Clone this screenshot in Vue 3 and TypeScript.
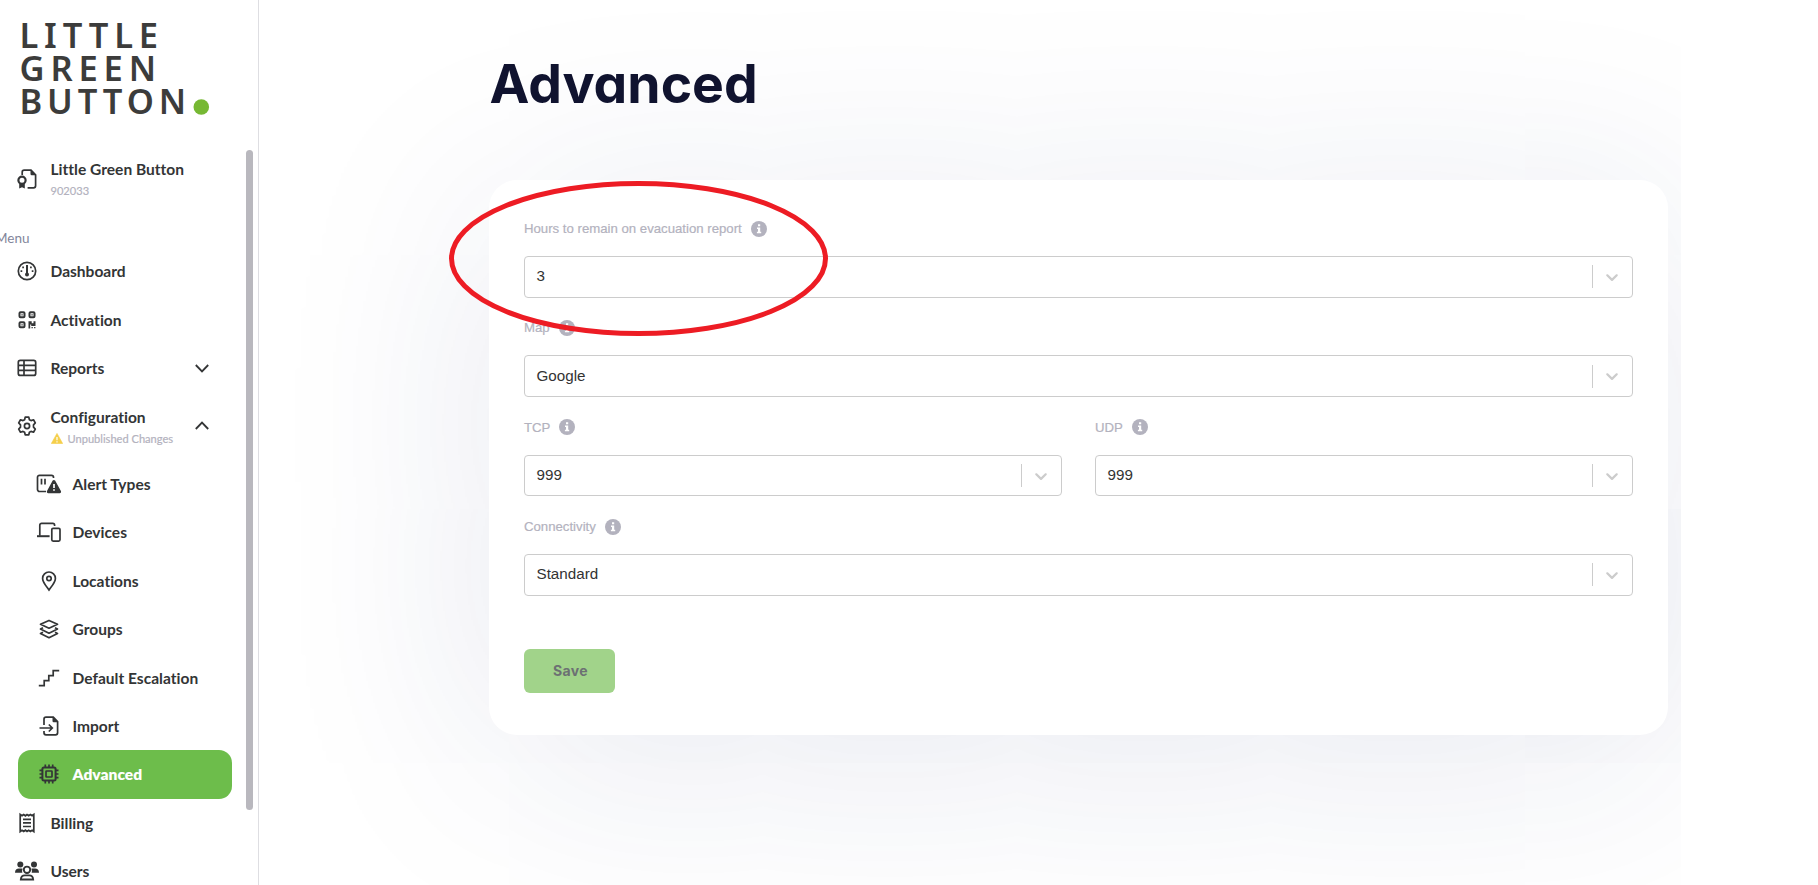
<template>
  <div class="layout">
    <aside class="sidebar">
      <svg class="logo" width="258" height="130" viewBox="0 0 258 130">
        <text x="19.500" y="48" textLength="138.500">LITTLE</text>
        <text x="19.500" y="81" textLength="136.500">GREEN</text>
        <text x="19.500" y="114" textLength="166.500">BUTTON</text>
        <circle cx="201.300" cy="107" r="7.800" />
      </svg>

      <div class="scroll-area">
        <div class="org">
          <svg class="icon" viewBox="0 0 24 24" v-html="icons.license"></svg>
          <div class="texts">
            <span class="name">Little Green Button</span>
            <span class="note">902033</span>
          </div>
        </div>
        <div class="menu-title">Menu</div>
        <nav>
          <a
            v-for="item in menu"
            :key="item.label"
            class="item"
            :class="{ sub: item.sub, active: item.active, tall: item.note }"
          >
            <svg class="icon" viewBox="0 0 24 24" v-html="icons[item.icon]"></svg>
            <div class="texts">
              <span class="name">{{ item.label }}</span>
              <span v-if="item.note" class="note">
                <svg class="warn" width="12" height="11" viewBox="0 0 12 11">
                  <path d="M6 .4 11.7 10.5H.3z" fill="#f5cf4a" stroke="#f5cf4a" stroke-width=".6" stroke-linejoin="round" />
                  <path d="M6 4v3.2M6 8.2v1.2" stroke="#fff" stroke-width="1.2" />
                </svg>
                {{ item.note }}
              </span>
            </div>
            <svg v-if="item.toggle" class="toggle" width="16" height="16" viewBox="0 0 16 16">
              <path :d="item.toggle === 'open' ? 'M1.8 11 8 4.6l6.2 6.4' : 'M1.8 5 8 11.4 14.2 5'" />
            </svg>
          </a>
        </nav>
        <div class="scrollbar"></div>
      </div>
    </aside>

    <main class="content">
      <h1>Advanced</h1>
      <section class="card">
        <div class="fields">
          <div v-for="f in fields" :key="f.label" class="field" :class="{ half: f.half }">
            <label>
              {{ f.label }}
              <svg width="16" height="16" viewBox="0 0 16 16">
                <circle cx="8" cy="8" r="8" fill="#b3b2be" />
                <path d="M7 3.3h2.2v2H7zM6 6.5h3.2v4.2h1v1.6H5.9v-1.6H7V8H6z" fill="#fff" />
              </svg>
            </label>
            <div class="select">
              <span class="value">{{ f.value }}</span>
              <span class="separator"></span>
              <svg class="arrow" width="20" height="20" viewBox="0 0 20 20">
                <path d="M4.5 7.5c.45-.45 1.05-.5 1.6 0L10 11.3l3.9-3.8c.55-.5 1.15-.45 1.6 0 .43.45.4 1.2 0 1.6l-4.7 4.55a1.15 1.15 0 0 1-1.6 0L4.5 9.1c-.4-.4-.43-1.15 0-1.6z" />
              </svg>
            </div>
          </div>
        </div>
        <button type="button" class="save" disabled>Save</button>
      </section>
    </main>

    <svg class="highlight" width="380" height="156" viewBox="0 0 380 156">
      <ellipse cx="189.5" cy="77.5" rx="187" ry="75" />
    </svg>
  </div>
</template>

<script setup lang="ts">
import { ref } from 'vue';

interface MenuItem {
  label: string;
  icon: string;
  note?: string;
  sub?: boolean;
  active?: boolean;
  toggle?: 'open' | 'closed';
}

interface Field {
  label: string;
  value: string;
  half?: boolean;
}

const menu = ref<MenuItem[]>([
  { label: 'Dashboard', icon: 'gauge' },
  { label: 'Activation', icon: 'qr' },
  { label: 'Reports', icon: 'table', toggle: 'closed' },
  { label: 'Configuration', icon: 'gear', note: 'Unpublished Changes', toggle: 'open' },
  { label: 'Alert Types', icon: 'alert', sub: true },
  { label: 'Devices', icon: 'devices', sub: true },
  { label: 'Locations', icon: 'pin', sub: true },
  { label: 'Groups', icon: 'layers', sub: true },
  { label: 'Default Escalation', icon: 'stairs', sub: true },
  { label: 'Import', icon: 'import', sub: true },
  { label: 'Advanced', icon: 'chip', sub: true, active: true },
  { label: 'Billing', icon: 'receipt' },
  { label: 'Users', icon: 'users' },
]);

const fields = ref<Field[]>([
  { label: 'Hours to remain on evacuation report', value: '3' },
  { label: 'Map', value: 'Google' },
  { label: 'TCP', value: '999', half: true },
  { label: 'UDP', value: '999', half: true },
  { label: 'Connectivity', value: 'Standard' },
]);

// fill-only shapes carry class "f"
const icons: Record<string, string> = {
  license:
    '<path d="M7.2 8V5.2a2 2 0 0 1 2-2H16l4.6 4.6v11a2 2 0 0 1-2 2h-6"/><path class="f" d="M15.5 2.8 21 8.3h-4.3a1.2 1.2 0 0 1-1.2-1.2z"/><circle cx="7" cy="13.2" r="3.6" stroke-width="2.2"/><path class="f" d="M4.2 16h5.6v5.6L7 20.2l-2.8 1.4z"/>',
  gauge:
    '<circle cx="12" cy="12" r="8.7"/><path d="M12 6v9" stroke-width="2"/><circle class="f" cx="12" cy="15.6" r="2"/><path d="M8.1 7.6v1.7M15.9 7.6v1.7M6.4 11.3v1.6M17.6 11.3v1.6" stroke-width="1.7"/>',
  qr:
    '<rect x="4.5" y="4.3" width="5" height="5" rx="1" stroke-width="2"/><rect x="14.5" y="4.3" width="5" height="5" rx="1" stroke-width="2"/><rect x="4.5" y="14.3" width="5" height="5" rx="1" stroke-width="2"/><path class="f" d="M6.4 6.2h1.3v1.3H6.4zM16.4 6.2h1.3v1.3h-1.3zM6.4 16.2h1.3v1.3H6.4zM13.5 13.3h3.2v2h1.8v-2h2v4.6h-4.3v-1.3h-1v3.9h-1.7zM16.5 19h1.3v1.3h-1.3zM19.1 19h1.3v1.3h-1.3z"/>',
  table:
    '<rect x="3.3" y="4.4" width="17.4" height="15" rx="2"/><path d="M3.3 9.3h17.4M3.3 14.4h17.4M9 4.4v15"/>',
  gear:
    '<path d="M10.2 3.2h3.6l.6 2.5 1.6.9 2.5-.8 1.8 3.1-1.8 1.9v2.4l1.8 1.9-1.8 3.1-2.5-.8-1.6.9-.6 2.5h-3.6l-.6-2.5-1.6-.9-2.5.8-1.8-3.1 1.8-1.9v-2.4L3.7 8.900l1.8-3.1 2.5.8 1.6-.9z" stroke-linejoin="round"/><circle cx="12" cy="12" r="2.6"/>',
  alert:
    '<path d="M9 19.5H2.5a2 2 0 0 1-2-2V5.3a2 2 0 0 1 2-2h12a2 2 0 0 1 2 2V6"/><path d="M4.5 6.8v5.7M8 6.8v5.7"/><path class="f" d="M15.7 8.6a1.4 1.4 0 0 1 2.4 0l5.8 10.5a1.4 1.4 0 0 1-1.2 2.1H11.2a1.4 1.4 0 0 1-1.2-2.1z"/><path d="M17 12v4M17 17.2v1.5" stroke="#fff"/>',
  devices:
    '<path d="M2.8 15.7V5.2a1.8 1.8 0 0 1 1.8-1.8h11.2a1.8 1.8 0 0 1 1.8 1.8v.8"/><path d="M0 16.2h12.6" stroke-width="2"/><rect x="14.8" y="8.3" width="8.2" height="12.8" rx="1.3"/>',
  pin:
    '<path d="M12 21c-1.5-2.3-6.4-7.6-6.4-11.6a6.4 6.4 0 0 1 12.8 0C18.4 13.4 13.5 18.7 12 21z"/><circle cx="12" cy="9.5" r="2.2"/>',
  layers:
    '<path d="M12 3.4 20.5 7.3 12 11.2 3.5 7.3zM6 10.7 3.5 12 12 16.2 20.5 12 18 10.7M6 15.2l-2.5 1.3 8.5 4.2 8.5-4.2-2.5-1.3" stroke-linejoin="round"/>',
  stairs:
    '<path d="M1.8 19.7h5.4v-5h4.6v-5h4.4v-5h6"/>',
  import:
    '<path d="M7 11V5.2a2 2 0 0 1 2-2h7.3l4.3 4.3v11.3a2 2 0 0 1-2 2H9a2 2 0 0 1-2-2V17M2.5 14h12.3M11.8 10.5l3.5 3.5-3.5 3.5"/><path class="f" d="M15.5 2.8 21 8.3h-4.3a1.2 1.2 0 0 1-1.2-1.2z"/>',
  chip:
    '<rect x="5.4" y="5.4" width="13.2" height="13.2" rx="1.5" stroke-width="2"/><rect x="9" y="9" width="6" height="6" rx=".5"/><path d="M8.3 2.5v3M12 2.5v3M15.7 2.5v3M8.3 18.5v3M12 18.5v3M15.7 18.5v3M2.5 8.3h3M2.5 12h3M2.5 15.7h3M18.5 8.3h3M18.5 12h3M18.5 15.7h3"/>',
  receipt:
    '<path d="M5.2 3.5 7 4.8l1.7-1.3 1.7 1.3L12 3.5l1.7 1.3 1.7-1.3 1.7 1.3 1.7-1.3v17l-1.7-1.3-1.7 1.3-1.7-1.3L12 20.5l-1.6-1.3-1.7 1.3L7 19.2l-1.8 1.3z"/><path d="M8 8.3h8M8 11.9h8M8 15.5h8"/>',
  users:
    '<circle class="f" cx="5.3" cy="5.5" r="3"/><circle class="f" cx="19" cy="5.5" r="3"/><path class="f" d="M0 13.7c0-3 1.6-4.2 4-4.2h3c.6 0 .6.4.4 1-.5 1.3-.3 2.2 0 3.2zM24 13.7c0-3-1.6-4.2-4-4.2h-3c-.6 0-.6.4-.4 1 .5 1.3.3 2.2 0 3.2z"/><circle cx="12" cy="10.8" r="3.2" stroke-width="1.9"/><path d="M5.8 20.5c.2-3 1.7-4.2 4-4.2h4.4c2.3 0 3.8 1.2 4 4.2z" stroke-width="1.8"/>',
};
</script>

<style>
body {
  margin: 0;
  background: #fff;
}
</style>

<style scoped>
.layout {
  position: relative;
  display: flex;
  height: 885px;
  overflow: hidden;
  background: #fff;
}
.sidebar {
  box-sizing: border-box;
  width: 259px;
  flex-shrink: 0;
  border-right: 1px solid #dedee2;
  font-family: Lato, 'Liberation Sans', sans-serif;
  font-variant-ligatures: none;
  color: #333536;
}
.logo {
  display: block;
}
.logo text {
  font-family: 'Noto Sans', sans-serif;
  font-size: 34.5px;
  font-weight: 650;
  fill: #3c3c3b;
}
.logo circle {
  fill: #76b833;
}
.scroll-area {
  position: relative;
  padding-top: 24px;
}
.scrollbar {
  position: absolute;
  top: 20px;
  right: 5px;
  width: 7px;
  height: 660px;
  border-radius: 4px;
  background: #b9b8be;
}
.org,
.item {
  display: flex;
  align-items: center;
  box-sizing: border-box;
}
.org {
  height: 49px;
  padding-left: 14.5px;
}
.item {
  height: 48.4px;
  width: 214px;
  margin-left: 18px;
  border-radius: 13px;
}
.item:not(.sub) .icon {
  margin-left: -3.5px;
}
.item.sub {
  padding-left: 18.5px;
}
.item.tall {
  height: 67.3px;
}
.org .texts,
.item.tall .texts {
  padding-top: 2px;
}
.item.active {
  background: #6dbd4b;
}
.item.active .name {
  color: #fff;
  font-weight: 800;
}
.icon {
  width: 24px;
  height: 24px;
  flex-shrink: 0;
  overflow: visible;
  fill: none;
  stroke: #333536;
  stroke-width: 1.7;
}
.icon :deep(.f) {
  fill: #333536;
  stroke: none;
}
.texts {
  display: flex;
  flex-direction: column;
  margin-left: 12px;
}
.name {
  font-size: 15.55px;
  line-height: 22px;
  font-weight: 700;
  white-space: nowrap;
}
.note {
  display: flex;
  align-items: center;
  gap: 5px;
  font-size: 11.1px;
  line-height: 21px;
  color: #b3b2be;
  white-space: nowrap;
  -webkit-text-stroke: 0.2px #b3b2be;
}
.toggle {
  margin-left: auto;
  margin-right: 22px;
  fill: none;
  stroke: #333536;
  stroke-width: 1.8;
}
.menu-title {
  height: 44.3px;
  margin-left: -5px;
  font-size: 13.5px;
  line-height: 71px;
  color: #83869b;
}
.content {
  box-sizing: border-box;
  width: 1422px;
  padding: 46px 13px 0 230px;
  overflow: hidden;
}
h1 {
  margin: 0;
  height: 134px;
  font-family: Inter, 'Liberation Sans', sans-serif;
  font-feature-settings: 'cv11';
  font-size: 53.5px;
  line-height: 76px;
  font-weight: 650;
  letter-spacing: 0;
  text-indent: 0.5px;
  color: #10132f;
}
.card {
  box-sizing: border-box;
  height: 555px;
  padding: 36px 35px 0;
  border-radius: 28px;
  background: #fff;
  box-shadow: 0 24px 220px -6px rgba(30, 45, 110, 0.135);
  font-family: 'Liberation Sans', Arial, sans-serif;
}
.fields {
  display: grid;
  grid-template-columns: 1fr 1fr;
  column-gap: 33px;
}
.field {
  grid-column: span 2;
  height: 99.4px;
}
.field.half {
  grid-column: span 1;
}
.field label {
  display: flex;
  align-items: center;
  gap: 9px;
  height: 25px;
  margin-bottom: 15px;
  font-size: 13.2px;
  color: #b3b2be;
  -webkit-text-stroke: 0.2px #b3b2be;
}
.select {
  display: flex;
  align-items: center;
  box-sizing: border-box;
  height: 41.6px;
  padding-left: 11.5px;
  border: 1px solid #ccc;
  border-radius: 4px;
}
.value {
  flex: 1;
  padding-bottom: 1px;
  font-size: 15.2px;
  line-height: 20px;
  color: #333;
}
.separator {
  width: 1px;
  height: 23px;
  background: #ccc;
}
.arrow {
  margin: 0 10px 0 9.5px;
  fill: #ccc;
}
.save {
  display: block;
  margin-top: 35.5px;
  width: 91px;
  height: 44px;
  padding: 0 0 1px 2px;
  border: none;
  border-radius: 6px;
  background: #a1d38a;
  font-family: Inter, sans-serif;
  font-size: 14px;
  font-weight: 700;
  letter-spacing: 0.4px;
  color: #6c7073;
}
/* hand-drawn marker over the first field */
.highlight {
  position: absolute;
  left: 449px;
  top: 181px;
  fill: none;
  stroke: #ed1c24;
  stroke-width: 5;
}
</style>
